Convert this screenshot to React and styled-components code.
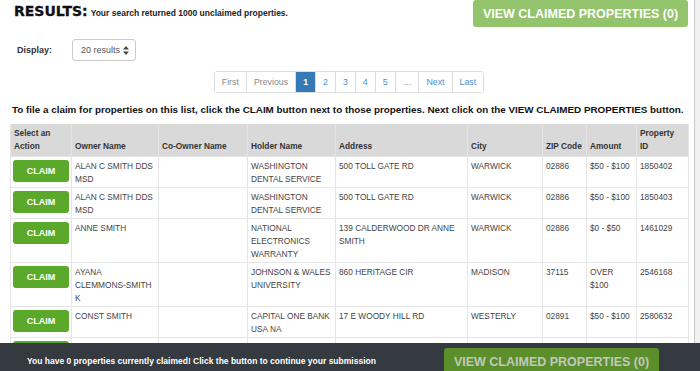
import styled, { createGlobalStyle } from 'styled-components'

const GlobalStyle = createGlobalStyle`
  html, body { margin: 0; padding: 0; background: #fff; }
  body {
    font-family: "Liberation Sans", Arial, sans-serif;
    color: #333;
    overflow: hidden;
  }
`

const Page = styled.div`
  display: flex;
  width: 700px;
  height: 371px;
  overflow: hidden;
`

const Content = styled.div`
  flex: 1;
  padding: 0 6px 0 10px;
  min-width: 0;
`

const ScrollTrack = styled.div`
  width: 5px;
  background: #f1f1f1;
  border-left: 1px solid #c9c9c9;
`

const TopBar = styled.div`
  display: flex;
  justify-content: space-between;
  align-items: flex-start;
`

const Title = styled.div`
  display: flex;
  align-items: baseline;
  gap: 3px;
  padding: 3px 0 0 4px;
`

const ResultsLabel = styled.span`
  font-family: "DejaVu Sans", sans-serif;
  font-weight: bold;
  font-size: 14px;
  color: #111;
  -webkit-text-stroke: 0.3px #111;
`

const Summary = styled.span`
  font-size: 8.5px;
  font-weight: bold;
  color: #222;
`

const ViewButton = styled.button`
  width: 215px;
  height: 27px;
  flex: none;
  border: none;
  border-radius: 3px;
  padding: 0;
  background: ${p => (p.$dim ? '#5b8f2c' : '#93c36c')};
  color: ${p => (p.$dim ? '#c3c8bb' : '#fff')};
  font-family: "Liberation Sans", Arial, sans-serif;
  font-weight: bold;
  font-size: 12.5px;
  cursor: pointer;
`

const DisplayRow = styled.div`
  display: flex;
  align-items: center;
  gap: 20px;
  margin-top: 12px;
  padding-left: 7px;
`

const Label = styled.span`
  font-size: 9px;
  font-weight: bold;
  color: #333;
`

const Select = styled.div`
  box-sizing: border-box;
  width: 64px;
  height: 22px;
  border: 1px solid #ccc;
  border-radius: 3px;
  padding: 0 6px 0 8px;
  display: flex;
  align-items: center;
  justify-content: space-between;
  font-size: 9px;
  color: #555;
`

const Pager = styled.ul`
  display: flex;
  width: fit-content;
  margin: 10px auto 0;
  padding: 0;
  list-style: none;
  border: 1px solid #ddd;
  border-radius: 3px;
  overflow: hidden;
`

const PageItem = styled.li`
  box-sizing: border-box;
  height: 20px;
  line-height: 20px;
  padding: 0 7px;
  font-size: 8.8px;
  border-left: 1px solid #ddd;
  &:first-child { border-left: none; }
  background: ${p => (p.$active ? '#337ab7' : '#fff')};
  color: ${p => (p.$active ? '#fff' : p.$muted ? '#8a8a8a' : '#4a8fcf')};
  font-weight: ${p => (p.$active ? 'bold' : 'normal')};
`

const Instruction = styled.p`
  margin: 10px 0 0 2px;
  font-size: 9.85px;
  font-weight: bold;
  line-height: 13px;
  color: #111;
  white-space: nowrap;
`

const Table = styled.table`
  width: 678px;
  margin-top: 8px;
  border-collapse: collapse;
  table-layout: fixed;
`

const Col = styled.col`
  width: ${p => p.$w}px;
`

const Th = styled.th`
  background: #d9d9d9;
  border: 1px solid #e4e4e4;
  border-top: none;
  padding: 3px 2px 3px 3px;
  font-size: 8.3px;
  line-height: 13px;
  font-weight: bold;
  color: #333;
  text-align: left;
  vertical-align: bottom;
  white-space: pre-line;
`

const Td = styled.td`
  border: 1px solid #e6e6e6;
  padding: 3px 2px 1px ${p => (p.$action ? 2 : 3)}px;
  font-size: 8.3px;
  line-height: 13px;
  color: #444;
  vertical-align: top;
`

const ClaimButton = styled.button`
  display: block;
  width: 56px;
  height: 22px;
  border: none;
  border-radius: 3px;
  background: #5ba92b;
  color: #fff;
  font-family: "Liberation Sans", Arial, sans-serif;
  font-size: 9px;
  font-weight: bold;
  padding: 0;
  cursor: pointer;
`

const Footer = styled.div`
  position: fixed;
  left: 0;
  right: 0;
  bottom: 0;
  height: 28px;
  box-sizing: border-box;
  padding: 5px 0 0 27px;
  background: #343a40;
  display: flex;
  align-items: flex-start;
  overflow: hidden;
`

const FooterText = styled.span`
  flex: 0 0 417px;
  height: 27px;
  line-height: 27px;
  color: #fff;
  font-size: 8.5px;
  font-weight: bold;
`

const columns = [
  ['Select an\nAction', 61],
  ['Owner Name', 87],
  ['Co-Owner Name', 89],
  ['Holder Name', 88],
  ['Address', 132],
  ['City', 75],
  ['ZIP Code', 44],
  ['Amount', 50],
  ['Property\nID', 52],
]

const rows = [
  ['ALAN C SMITH DDS MSD', '', 'WASHINGTON DENTAL SERVICE', '500 TOLL GATE RD', 'WARWICK', '02886', '$50 - $100', '1850402'],
  ['ALAN C SMITH DDS MSD', '', 'WASHINGTON DENTAL SERVICE', '500 TOLL GATE RD', 'WARWICK', '02886', '$50 - $100', '1850403'],
  ['ANNE SMITH', '', 'NATIONAL ELECTRONICS WARRANTY', '139 CALDERWOOD DR ANNE SMITH', 'WARWICK', '02886', '$0 - $50', '1461029'],
  ['AYANA CLEMMONS\u2011SMITH K', '', 'JOHNSON & WALES UNIVERSITY', '860 HERITAGE CIR', 'MADISON', '37115', 'OVER $100', '2546168'],
  ['CONST SMITH', '', 'CAPITAL ONE BANK USA NA', '17 E WOODY HILL RD', 'WESTERLY', '02891', '$50 - $100', '2580632'],
  ['DAVID SMITH', '', 'BANK OF AMERICA', '22 MAIN ST', 'PROVIDENCE', '02903', '$0 - $50', '2601145'],
]

const pages = [
  { label: 'First', muted: true },
  { label: 'Previous', muted: true },
  { label: '1', active: true },
  { label: '2' },
  { label: '3' },
  { label: '4' },
  { label: '5' },
  { label: '…', muted: true },
  { label: 'Next' },
  { label: 'Last' },
]

const SortArrows = () => (
  <svg width="6" height="9" viewBox="0 0 6 9">
    <path d="M3 0 L6 3.5 H0 Z M3 9 L0 5.5 H6 Z" fill="#444" />
  </svg>
)

export default function App() {
  return (
    <>
      <GlobalStyle />
      <Page>
        <Content>
          <TopBar>
            <Title>
              <ResultsLabel>RESULTS:</ResultsLabel>
              <Summary>Your search returned 1000 unclaimed properties.</Summary>
            </Title>
            <ViewButton>VIEW CLAIMED PROPERTIES (0)</ViewButton>
          </TopBar>

          <DisplayRow>
            <Label>Display:</Label>
            <Select>
              <span>20 results</span>
              <SortArrows />
            </Select>
          </DisplayRow>

          <Pager>
            {pages.map(p => (
              <PageItem key={p.label} $active={p.active} $muted={p.muted}>{p.label}</PageItem>
            ))}
          </Pager>

          <Instruction>
            To file a claim for properties on this list, click the CLAIM button next to those properties. Next click on the VIEW CLAIMED PROPERTIES button.
          </Instruction>

          <Table>
            <colgroup>
              {columns.map(([name, w]) => <Col key={name} $w={w} />)}
            </colgroup>
            <thead>
              <tr>
                {columns.map(([name]) => <Th key={name}>{name}</Th>)}
              </tr>
            </thead>
            <tbody>
              {rows.map((r, i) => (
                <tr key={i}>
                  <Td $action><ClaimButton>CLAIM</ClaimButton></Td>
                  {r.map((cell, j) => <Td key={j}>{cell}</Td>)}
                </tr>
              ))}
            </tbody>
          </Table>
        </Content>
        <ScrollTrack />
      </Page>

      <Footer>
        <FooterText>You have 0 properties currently claimed! Click the button to continue your submission</FooterText>
        <ViewButton $dim>VIEW CLAIMED PROPERTIES (0)</ViewButton>
      </Footer>
    </>
  )
}
